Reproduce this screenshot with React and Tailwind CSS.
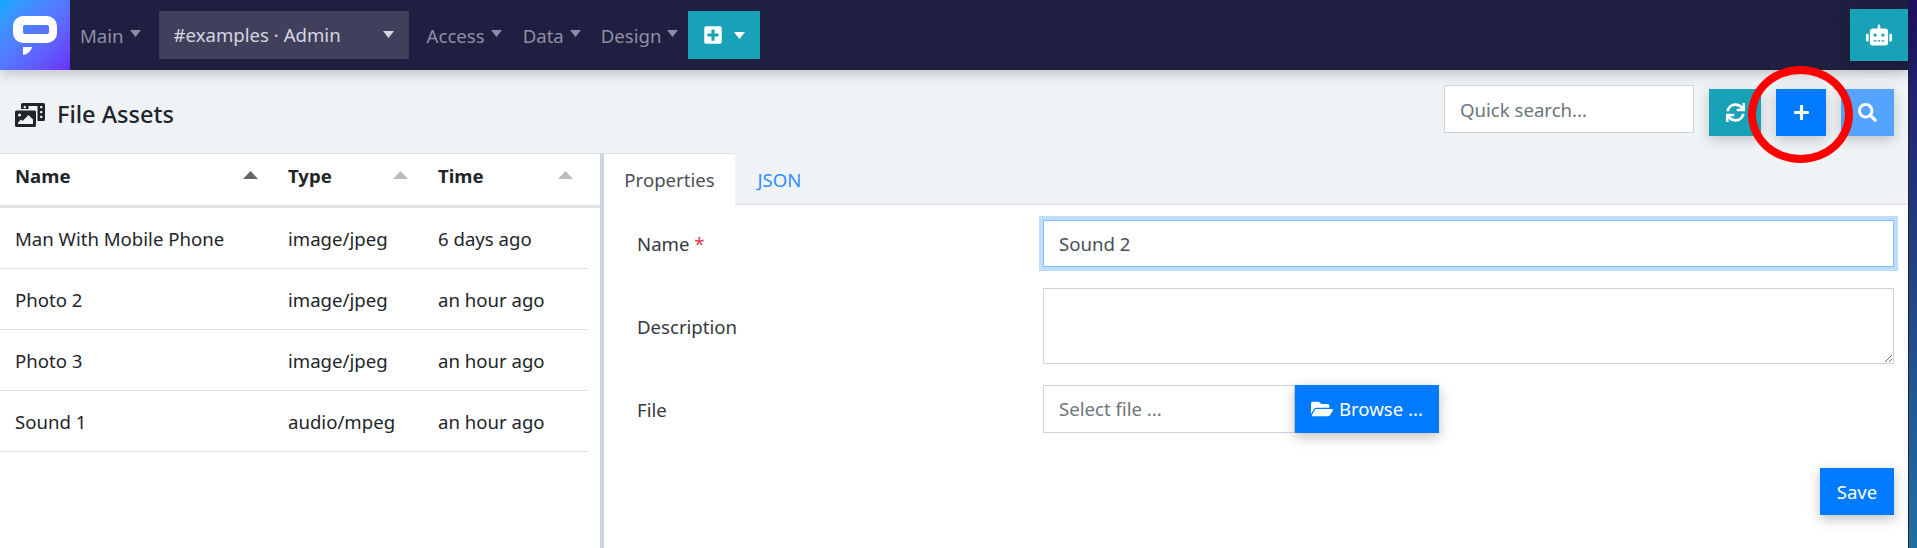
import { FaSync, FaPlus, FaSearch, FaRobot, FaFolderOpen, FaPhotoVideo, FaPlusSquare } from "react-icons/fa";

const files = [
  { name: "Man With Mobile Phone", type: "image/jpeg", time: "6 days ago" },
  { name: "Photo 2", type: "image/jpeg", time: "an hour ago" },
  { name: "Photo 3", type: "image/jpeg", time: "an hour ago" },
  { name: "Sound 1", type: "audio/mpeg", time: "an hour ago" },
];

function Caret({ className = "" }) {
  return (
    <svg width="11" height="7" viewBox="0 0 11 7" className={className}>
      <path d="M0 0h11L5.5 7z" fill="currentColor" />
    </svg>
  );
}

function SortArrow({ className = "" }) {
  return (
    <svg width="15" height="8" viewBox="0 0 15 8" className={className}>
      <path d="M0 8h15L7.5 0z" fill="currentColor" />
    </svg>
  );
}

function NavItem({ label }) {
  return (
    <div className="flex items-center gap-[6px] pt-[2px] text-[#8f8fa3]">
      {label}
      <Caret className="mb-[4px]" />
    </div>
  );
}

function ActionButton({ color, width, children }) {
  return (
    <button className={`flex h-[47px] items-center justify-center text-white text-[19px] shadow-[0_4px_12px_rgba(0,0,0,0.2)] ${width} ${color}`}>
      {children}
    </button>
  );
}

function FormRow({ label, required, children }) {
  return (
    <div className="flex items-center">
      <div className="w-[439px] pl-[33px] pt-[1px] text-[#343a40]">
        {label}
        {required && <span className="text-[#dc3545]"> *</span>}
      </div>
      <div className="flex-1">{children}</div>
    </div>
  );
}

export default function App() {
  return (
    <div className="relative h-[548px] w-[1917px] overflow-hidden bg-gradient-to-b from-[#1f0f63] to-[#20709f] pr-[8px] font-['Noto_Sans',sans-serif] text-[18.6px] text-[#212529]">
      <div className="flex h-full flex-col border-r border-[#1f1f41] bg-[#f0f3f6]">
        <nav className="relative z-10 flex h-[70px] shrink-0 items-center bg-[#1f1f41] shadow-[0_4px_12px_rgba(0,0,0,0.2)]">
          <div className="flex h-[70px] w-[70px] items-center justify-center bg-gradient-to-br from-[#00a8ff] to-[#6a2cff]">
            <svg width="44" height="39" viewBox="0 0 44 39">
              <path fillRule="evenodd" fill="#fff" d="M10 0h24a10 10 0 0 1 10 10v7a10 10 0 0 1-10 10H10A10 10 0 0 1 0 17v-7A10 10 0 0 1 10 0zm2 9a2 2 0 0 0-2 2v5a2 2 0 0 0 2 2h22a2 2 0 0 0 2-2v-5a2 2 0 0 0-2-2z" />
              <path fill="#fff" d="M10 31h9c-1 4-4 7-9 8z" />
            </svg>
          </div>
          <div className="ml-[10px]"><NavItem label="Main" /></div>
          <div className="ml-[18px] flex h-[48px] w-[250px] items-center justify-between bg-[#40405c] px-[15px] text-[#d6d6e0]">
            #examples · Admin
            <Caret className="mb-[2px]" />
          </div>
          <div className="ml-[18px]"><NavItem label="Access" /></div>
          <div className="ml-[21px]"><NavItem label="Data" /></div>
          <div className="ml-[20px]"><NavItem label="Design" /></div>
          <button className="ml-[10px] flex h-[48px] w-[72px] items-center justify-center gap-[11px] bg-[#17a2b8] text-white">
            <FaPlusSquare className="text-[20px]" />
            <Caret />
          </button>
          <button className="ml-auto flex h-[52px] w-[58px] items-center justify-center bg-[#17a2b8] text-[26px] text-white shadow-[0_4px_12px_rgba(0,0,0,0.15)]">
            <FaRobot />
          </button>
        </nav>

        <div className="flex h-[83px] shrink-0 items-start pl-[15px] pr-[14px] pt-[15px]">
          <div className="flex h-[59px] items-center">
            <FaPhotoVideo className="text-[30px] text-[#212529]" />
            <h1 className="ml-[12px] text-[23.5px] font-medium">File Assets</h1>
          </div>
          <div className="ml-auto flex items-start gap-[15px]">
            <input
              placeholder="Quick search..."
              className="h-[48px] w-[250px] border border-[#ced4da] bg-white px-[15px] text-[#495057] placeholder:text-[#6c757d]"
            />
            <div className="mt-[4px] flex gap-[15px]">
              <ActionButton color="bg-[#17a2b8]" width="w-[52px]"><FaSync /></ActionButton>
              <ActionButton color="bg-[#007bff]" width="w-[50px]"><FaPlus className="text-[17px]" /></ActionButton>
              <ActionButton color="bg-[#54a3ff]" width="w-[53px]"><FaSearch /></ActionButton>
            </div>
          </div>
        </div>

        <div className="flex min-h-0 flex-1">
          <div className="w-[600px] shrink-0 border-t border-[#dee2e6] bg-white pr-[12px]">
            <div className="-mr-[12px] grid h-[54px] grid-cols-[273px_150px_1fr] items-center border-b-[3px] border-[#dee2e6] pb-[8px] pr-[12px] font-bold">
              <div className="flex items-center justify-between px-[15px]">
                Name
                <SortArrow className="text-[#666]" />
              </div>
              <div className="flex items-center justify-between px-[15px]">
                Type
                <SortArrow className="text-[#bbb]" />
              </div>
              <div className="flex items-center justify-between px-[15px]">
                Time
                <SortArrow className="text-[#bbb]" />
              </div>
            </div>
            {files.map((f) => (
              <div key={f.name} className="grid h-[61px] grid-cols-[273px_150px_1fr] items-center border-b border-[#dee2e6] pt-[2px]">
                <div className="pl-[15px]">{f.name}</div>
                <div className="pl-[15px]">{f.type}</div>
                <div className="pl-[15px]">{f.time}</div>
              </div>
            ))}
          </div>
          <div className="w-[4px] shrink-0 bg-[#c9d6e2]" />
          <div className="flex min-w-0 flex-1 flex-col">
            <div className="flex h-[52px] shrink-0 border-b border-[#dee2e6]">
              <div className="flex h-[53px] w-[131px] items-center justify-center border-t border-[#dee2e6] bg-white text-[#495057]">
                Properties
              </div>
              <div className="flex w-[89px] items-center justify-center pt-[2px] text-[#2f8fff]">JSON</div>
            </div>
            <div className="flex flex-1 flex-col gap-[21px] bg-white pr-[14px] pt-[15px]">
              <FormRow label="Name" required>
                <input
                  defaultValue="Sound 2"
                  className="h-[47px] w-full border border-[#80bdff] px-[15px] text-[#495057] shadow-[0_0_0_4px_rgba(0,123,255,0.25)] outline-none"
                />
              </FormRow>
              <FormRow label="Description">
                <textarea className="block h-[76px] w-full border border-[#ced4da]" />
              </FormRow>
              <FormRow label="File">
                <div className="flex h-[48px] items-stretch">
                  <div className="flex w-[252px] items-center border border-[#ced4da] pl-[15px] text-[#6c757d]">
                    Select file ...
                  </div>
                  <button className="flex w-[144px] items-center justify-center gap-[6px] bg-[#007bff] text-white shadow-[0_4px_12px_rgba(0,0,0,0.25)]">
                    <FaFolderOpen className="text-[22px]" />
                    Browse ...
                  </button>
                </div>
              </FormRow>
              <div className="mt-[14px] flex justify-end">
                <button className="h-[47px] w-[74px] bg-[#007bff] text-white shadow-[0_4px_12px_rgba(0,0,0,0.25)]">Save</button>
              </div>
            </div>
          </div>
        </div>
      </div>
      {/* red annotation drawn over the screenshot */}
      <div className="absolute left-[1748px] top-[66px] z-20 h-[97px] w-[105px] rounded-[50%] border-[8px] border-[#ff0000]" />
    </div>
  );
}
